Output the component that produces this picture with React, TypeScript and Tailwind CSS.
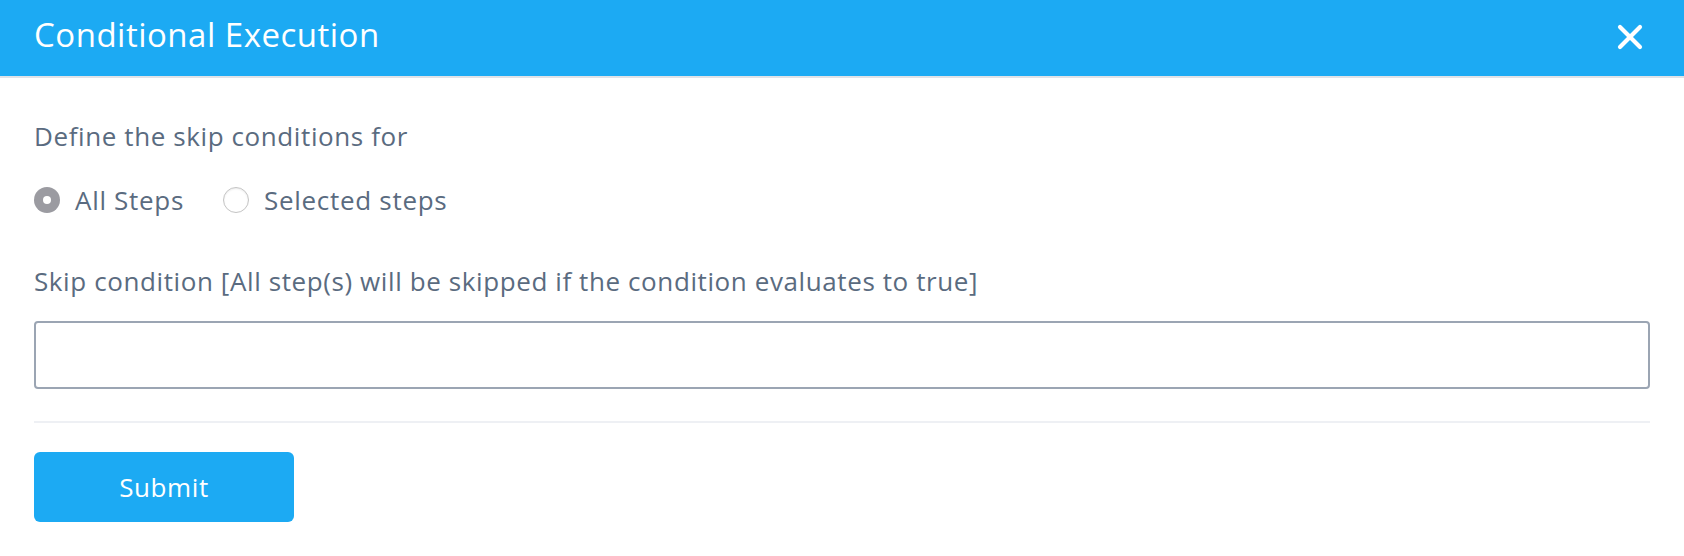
import { X } from "lucide-react";

const font = { fontFamily: "'Open Sans', 'Noto Sans', sans-serif" };

function Radio({ checked, label }: { checked?: boolean; label: string }) {
  return (
    <label className="flex items-center gap-[15px] cursor-pointer">
      {checked ? (
        <span className="flex h-[26px] w-[26px] items-center justify-center rounded-full bg-[#9b9ba1]">
          <span className="h-[8px] w-[8px] rounded-full bg-white" />
        </span>
      ) : (
        <span className="h-[26px] w-[26px] rounded-full border border-[#c4c4c4] bg-white shadow-[inset_0_1px_2px_rgba(0,0,0,0.08)]" />
      )}
      <span className="text-[26px] leading-[30px] tracking-[0.7px] text-[#5a6b80]">{label}</span>
    </label>
  );
}

export default function App() {
  return (
    <div className="min-h-[556px] w-full bg-white" style={font}>
      <div className="flex h-[78px] items-center justify-between border-b-2 border-[#dfe3e8] bg-[#1caaf3] pl-[34px] pr-[34px]">
        <h1 className="pb-[6px] text-[33px] font-normal tracking-[0.5px] text-white">Conditional Execution</h1>
        <button className="pb-[2px] text-white">
          <X className="h-[40px] w-[40px]" strokeWidth={2.5} />
        </button>
      </div>

      <div className="px-[34px] pt-[43px]">
        <p className="text-[26px] leading-[30px] tracking-[0.6px] text-[#5a6b80]">Define the skip conditions for</p>

        <div className="mt-[34px] flex items-center gap-[39px]">
          <Radio checked label="All Steps" />
          <Radio label="Selected steps" />
        </div>

        <p className="mt-[51px] text-[26px] leading-[30px] tracking-[0.6px] text-[#5a6b80]">
          Skip condition [All step(s) will be skipped if the condition evaluates to true]
        </p>

        <input
          type="text"
          className="mt-[25px] block h-[68px] w-full rounded-[4px] border-2 border-[#9ba5b3] px-3 text-[22px] text-[#5a6b80] outline-none"
        />

        <div className="mt-[32px] h-[2px] w-full bg-[#eef0f4]" />

        <button className="mt-[29px] h-[70px] w-[260px] rounded-[6px] bg-[#1caaf3] text-[26px] tracking-[0.6px] text-white">
          Submit
        </button>
      </div>
    </div>
  );
}
